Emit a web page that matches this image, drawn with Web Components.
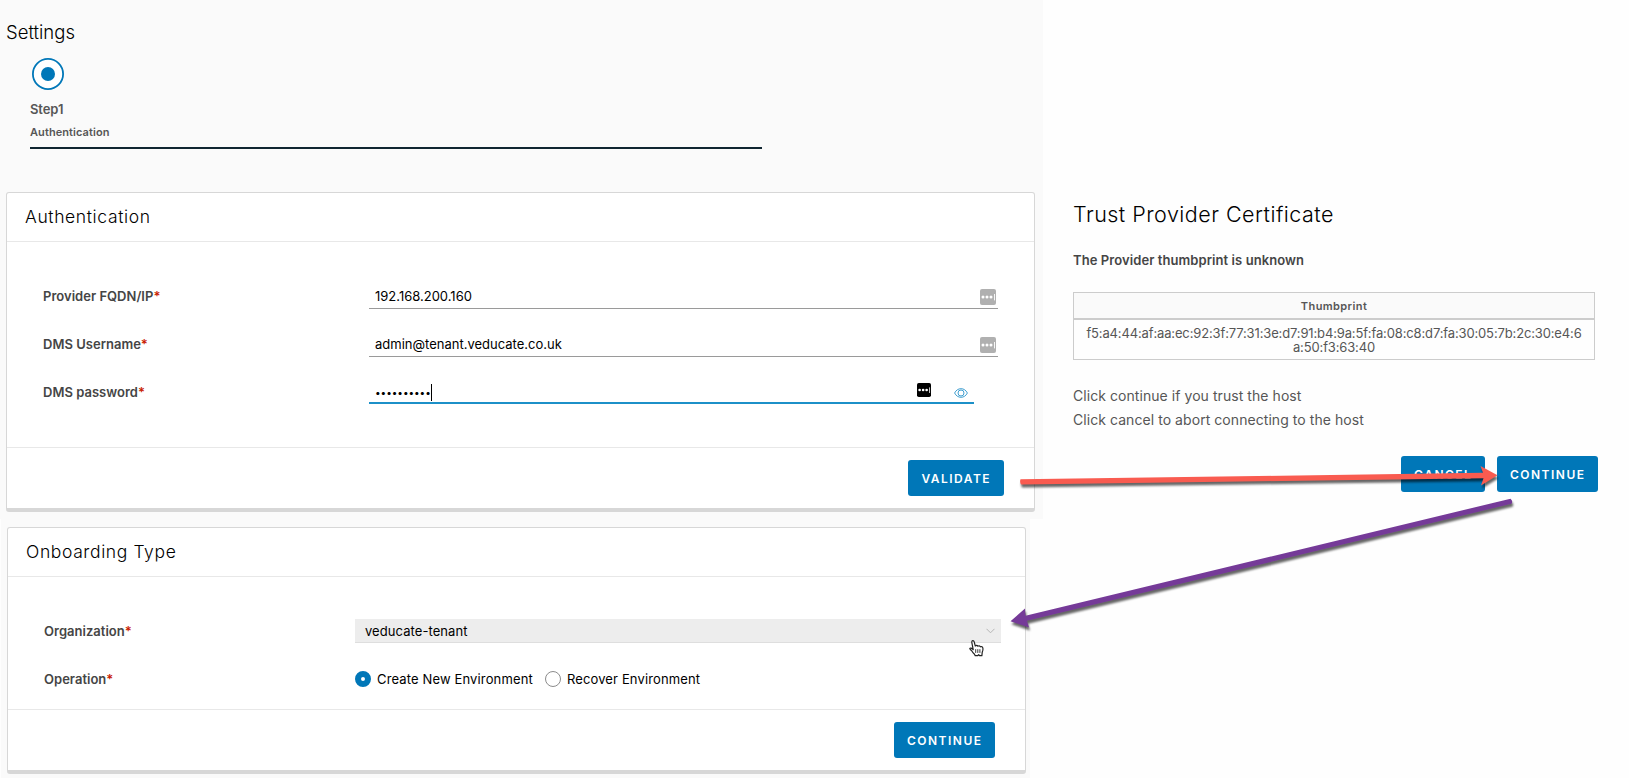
<!DOCTYPE html>
<html lang="en">
<head>
<meta charset="utf-8">
<title>Settings</title>
<style>
    html, body {
        margin: 0;
        height: 778px;
        overflow: hidden;
        background: #fefefe;
    }

    body {
        font-family: Inter, "Open Sans", sans-serif;
        font-size: 13px;
        color: #000;
    }
</style>
</head>
<body>
<onboarding-page></onboarding-page>

<script>
class BaseElement extends HTMLElement {
    constructor() {
        super();
        this.attachShadow({ mode: 'open' });
        this.shadowRoot.innerHTML = this.render();
    }
}

class ActionButton extends BaseElement {
    render() {
        return `
            <style>
                :host { display: block; }
                button {
                    display: block;
                    width: 100%;
                    height: 36px;
                    padding: 1px 0 0;
                    border: 0;
                    border-radius: 3px;
                    background: #0077b8;
                    color: #fff;
                    font: 600 12px/35px Inter, sans-serif;
                    letter-spacing: 1.5px;
                    text-indent: 0.5px;
                }
            </style>
            <button><slot></slot></button>
        `;
    }
}

class WizardStep extends BaseElement {
    render() {
        return `
            <style>
                :host {
                    display: block;
                    width: 732px;
                    border-bottom: 2px solid #0f2531;
                    color: #565656;
                    font-weight: 600;
                }
                svg { display: block; margin-left: 2px; }
                .name { margin-top: 9px; font-size: 13px; line-height: 20px; letter-spacing: -0.1px; }
                .title { padding: 3px 0 5px; font-size: 11px; line-height: 20px; letter-spacing: 0.08px; }
            </style>
            <svg width="32" height="32" viewBox="0 0 32 32">
                <circle cx="16" cy="16" r="15.1" fill="#fff" stroke="#0077b8" stroke-width="1.8"/>
                <circle cx="16" cy="16" r="7" fill="#0077b8"/>
            </svg>
            <div class="name"><slot name="name"></slot></div>
            <div class="title"><slot></slot></div>
        `;
    }
}

class FormCard extends BaseElement {
    render() {
        return `
            <style>
                :host {
                    display: block;
                    box-sizing: border-box;
                    border: 1px solid #d7d7d7;
                    border-bottom-width: 4px;
                    border-radius: 3px;
                    background: #fff;
                }
                header {
                    height: 48px;
                    padding-left: 18px;
                    border-bottom: 1px solid #e8e8e8;
                    font-size: 17.5px;
                    font-weight: 350;
                    line-height: 48px;
                    letter-spacing: 0.62px;
                }
                .main {
                    display: flex;
                    flex-direction: column;
                    gap: 23px;
                    padding: 42px 0 var(--card-bottom, 42px) 36px;
                }
                footer {
                    display: flex;
                    justify-content: flex-end;
                    height: 48px;
                    padding: 12px 30px 0 0;
                    border-top: 1px solid #e8e8e8;
                }
            </style>
            <header><slot name="title"></slot></header>
            <div class="main"><slot></slot></div>
            <footer><slot name="actions"></slot></footer>
        `;
    }
}

class FormField extends BaseElement {
    render() {
        return `
            <style>
                :host {
                    display: flex;
                    height: 25px;
                    line-height: 25px;
                }
                .label {
                    flex: none;
                    width: var(--label-width, 326px);
                    color: #454545;
                    font-weight: 600;
                    letter-spacing: 0.02px;
                }
                .label span { color: #c92100; }
                .control { display: flex; align-items: flex-start; }
            </style>
            <div class="label"><slot name="label"></slot><span>*</span></div>
            <div class="control"><slot></slot></div>
        `;
    }
}

class TextInput extends BaseElement {
    render() {
        return `
            <style>
                :host {
                    display: flex;
                    box-sizing: border-box;
                    width: 629px;
                    height: 25px;
                    padding: 0 2px 0 6px;
                    border-bottom: 1px solid #9a9a9a;
                    line-height: 25px;
                    justify-content: space-between;
                }
                :host([focused]) {
                    width: 605px;
                    height: 24px;
                    padding-right: 6px;
                    border-bottom: 2px solid #1c90c8;
                }
                .caret { display: none; width: 1px; height: 17px; margin-top: 4px; background: #000; }
                :host([focused]) .caret { display: block; }
                .value { display: flex; }
                .icons { display: flex; align-items: flex-start; }
            </style>
            <div class="value"><slot></slot><i class="caret"></i></div>
            <div class="icons"><slot name="icons"></slot></div>
        `;
    }
}

class PasswordBadge extends BaseElement {
    render() {
        return `
            <style>
                :host { display: block; width: 16px; height: 16px; margin-top: 5px; color: #b0b0b0; }
                :host([active]) { width: 14px; height: 14px; margin: 3px 23px 0 0; color: #000; }
                svg { display: block; width: 100%; height: 100%; }
            </style>
            <svg viewBox="0 0 16 16">
                <rect width="16" height="16" rx="2" fill="currentColor"/>
                <g fill="#fff">
                    <circle cx="3" cy="8" r="1.5"/>
                    <circle cx="7" cy="8" r="1.5"/>
                    <circle cx="11" cy="8" r="1.5"/>
                    <rect x="14" y="5" width="0.9" height="6.4"/>
                </g>
            </svg>
        `;
    }
}

class EyeIcon extends BaseElement {
    render() {
        return `
            <style>
                :host { display: block; width: 14px; height: 10px; margin-top: 8px; }
                svg { display: block; }
            </style>
            <svg width="14" height="10" viewBox="0 0 14 10" fill="none" stroke="#2b94cb" stroke-width="0.9">
                <path d="M0.6 5C2.1 2.1 4.3 0.7 7 0.7s4.9 1.4 6.4 4.3C11.9 7.9 9.7 9.3 7 9.3S2.1 7.9 0.6 5z"/>
                <circle cx="7" cy="5" r="3"/>
            </svg>
        `;
    }
}

class SelectBox extends BaseElement {
    render() {
        return `
            <style>
                :host {
                    display: flex;
                    justify-content: space-between;
                    align-items: center;
                    box-sizing: border-box;
                    width: 646px;
                    height: 24px;
                    padding: 1px 6px 0 10px;
                    border-bottom: 1px solid #dedede;
                    background: #ededed;
                    letter-spacing: 0.07px;
                }
            </style>
            <span><slot></slot></span>
            <svg width="9" height="6" viewBox="0 0 9 6" fill="none" stroke="#b5b5b5">
                <path d="M0.5 0.8L4.5 4.8L8.5 0.8"/>
            </svg>
        `;
    }
}

class RadioOption extends BaseElement {
    render() {
        return `
            <style>
                :host { display: flex; margin-right: 12px; letter-spacing: 0.14px; }
                i {
                    box-sizing: border-box;
                    width: 16px;
                    height: 16px;
                    margin: 4px 6px 0 0;
                    border: 1px solid #8c8c8c;
                    border-radius: 50%;
                    background: #fff;
                }
                :host([checked]) i { border: 6px solid #0077b8; }
            </style>
            <i></i><slot></slot>
        `;
    }
}

class CertificateDialog extends BaseElement {
    render() {
        return `
            <style>
                :host { display: block; color: #565656; }
                h2 {
                    margin: 0;
                    color: #000;
                    font-size: 21.5px;
                    font-weight: 300;
                    line-height: 30px;
                    letter-spacing: 0.48px;
                }
                h3 {
                    margin: 21px 0 0;
                    color: #454545;
                    font-size: 13px;
                    font-weight: 600;
                    line-height: 20px;
                    letter-spacing: 0.08px;
                }
                table {
                    width: 522px;
                    margin: 22px 0 24px;
                    border: 1px solid #ccc;
                    border-spacing: 0;
                    text-align: center;
                }
                th {
                    height: 24px;
                    padding: 1px 0 0;
                    border-bottom: 2px solid #ccc;
                    background: #fafafa;
                    font-size: 11px;
                    font-weight: 600;
                    line-height: 24px;
                    letter-spacing: 0.4px;
                }
                td { height: 28px; padding: 6px 0 5px; line-height: 14px; letter-spacing: -0.14px; }
                p { margin: 0; font-size: 14px; line-height: 24px; letter-spacing: 0.06px; }
                .actions { display: flex; gap: 12px; margin: 24px 0 0 328px; }
                .cancel { width: 84px; }
                .continue { width: 101px; }
            </style>
            <h2>Trust Provider Certificate</h2>
            <h3>The Provider thumbprint is unknown</h3>
            <table>
                <tr><th>Thumbprint</th></tr>
                <tr><td>f5:a4:44:af:aa:ec:92:3f:77:31:3e:d7:91:b4:9a:5f:fa:08:c8:d7:fa:30:05:7b:2c:30:e4:6<br>a:50:f3:63:40</td></tr>
            </table>
            <p>Click continue if you trust the host</p>
            <p>Click cancel to abort connecting to the host</p>
            <div class="actions">
                <action-button class="cancel">CANCEL</action-button>
                <action-button class="continue">CONTINUE</action-button>
            </div>
        `;
    }
}

// Arrows and pointer drawn over the panels
class FlowArrows extends BaseElement {
    render() {
        return `
            <style>
                :host { position: absolute; inset: 0; pointer-events: none; }
                svg { display: block; }
                .arrow { filter: drop-shadow(1px 3px 1.2px rgba(0, 0, 0, 0.6)); }
            </style>
            <svg width="1629" height="778" viewBox="0 0 1629 778">
                <g class="arrow" fill="#f95b50">
                    <path d="M1020.5 479.3L1483 472.8L1480.5 466L1497.5 475.2L1481 485.5L1483.5 478.2L1021 484.6Q1019.5 482 1020.5 479.3z"/>
                </g>
                <g class="arrow" fill="#753a98">
                    <path d="M1510.5 498.7Q1513.3 501 1511.5 503.8L1027 620.8L1029 627.5L1010.5 621.3L1025 608.5L1025.5 615.8z"/>
                </g>
                <g transform="translate(969 640)" fill="#fff" stroke="#222" stroke-width="1.2" stroke-linejoin="round">
                    <path d="M4.2 9.6L2.8 2.3Q2.6 0.9 3.8 0.7Q4.8 0.6 5.2 1.9L6.3 6Q7.8 4.7 8.8 6.2Q10.5 5.1 11.4 6.8Q13.4 6 13.9 8.2Q14.3 10.3 13.2 12.4L12.9 15.6H10.5L9.7 14.7L8.6 15.7H6.2L5.5 14.2Q3.8 12.8 2.7 10.8Q1 9.8 0.8 8.4Q1.7 7.2 4.2 9.6z"/>
                    <path d="M6.7 9.2V12.9M8.8 9.2V12.9M10.9 9.2V12.9" stroke-width="0.9"/>
                </g>
            </svg>
        `;
    }
}

class OnboardingPage extends BaseElement {
    render() {
        return `
            <style>
                :host { position: relative; display: flex; height: 778px; }
                .left { flex: none; width: 1043px; }
                .settings {
                    box-sizing: border-box;
                    height: 519px;
                    padding: 20px 8px 0 6px;
                    background: #fafafa;
                }
                h1 { margin: 0; font-size: 18.5px; font-weight: 350; line-height: 24px; }
                wizard-step { margin: 14px 0 43px 24px; }
                .onboarding {
                    box-sizing: border-box;
                    width: 1029px;
                    height: 259px;
                    margin-left: 1px;
                    padding: 8px 4px 0 6px;
                    background: #fafafa;
                }
                .onboarding form-card { --card-bottom: 17px; --label-width: 311px; }
                .dots { font-size: 10px; letter-spacing: -0.05px; }
                certificate-dialog { margin: 199px 0 0 30px; }
                .validate { width: 96px; }
                .continue { width: 101px; }
            </style>
            <div class="left">
                <div class="settings">
                    <h1>Settings</h1>
                    <wizard-step><span slot="name">Step1</span>Authentication</wizard-step>
                    <form-card>
                        <span slot="title">Authentication</span>
                        <form-field>
                            <span slot="label">Provider FQDN/IP</span>
                            <text-input>192.168.200.160<password-badge slot="icons"></password-badge></text-input>
                        </form-field>
                        <form-field>
                            <span slot="label">DMS Username</span>
                            <text-input>admin@tenant.veducate.co.uk<password-badge slot="icons"></password-badge></text-input>
                        </form-field>
                        <form-field>
                            <span slot="label">DMS password</span>
                            <text-input focused>
                                <span class="dots">••••••••••</span>
                                <password-badge slot="icons" active></password-badge>
                                <eye-icon slot="icons"></eye-icon>
                            </text-input>
                        </form-field>
                        <action-button slot="actions" class="validate">VALIDATE</action-button>
                    </form-card>
                </div>
                <div class="onboarding">
                    <form-card>
                        <span slot="title">Onboarding Type</span>
                        <form-field>
                            <span slot="label">Organization</span>
                            <select-box>veducate-tenant</select-box>
                        </form-field>
                        <form-field>
                            <span slot="label">Operation</span>
                            <radio-option checked>Create New Environment</radio-option>
                            <radio-option>Recover Environment</radio-option>
                        </form-field>
                        <action-button slot="actions" class="continue">CONTINUE</action-button>
                    </form-card>
                </div>
            </div>
            <certificate-dialog></certificate-dialog>
            <flow-arrows></flow-arrows>
        `;
    }
}

customElements.define('action-button', ActionButton);
customElements.define('wizard-step', WizardStep);
customElements.define('form-card', FormCard);
customElements.define('form-field', FormField);
customElements.define('text-input', TextInput);
customElements.define('password-badge', PasswordBadge);
customElements.define('eye-icon', EyeIcon);
customElements.define('select-box', SelectBox);
customElements.define('radio-option', RadioOption);
customElements.define('certificate-dialog', CertificateDialog);
customElements.define('flow-arrows', FlowArrows);
customElements.define('onboarding-page', OnboardingPage);
</script>
</body>
</html>
